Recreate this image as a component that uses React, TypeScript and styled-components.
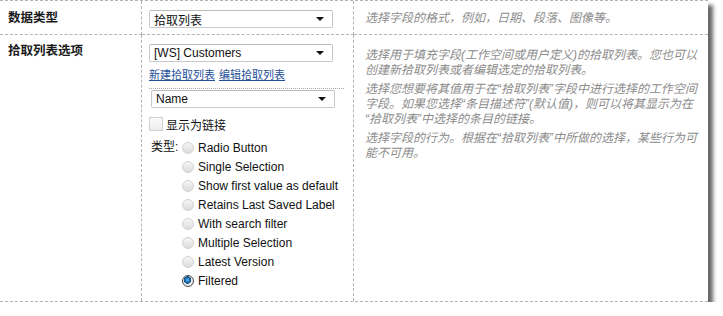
import React from "react";
import styled, { createGlobalStyle } from "styled-components";

const Global = createGlobalStyle`
  html, body { margin: 0; padding: 0; background: #fff; }
  body {
    font-family: "Liberation Sans", "Noto Sans CJK SC", Arial, sans-serif;
    font-size: 12px;
    color: #111;
  }
`;

const dash = "1px dashed #b4b4b4";

const Panel = styled.div`
  width: 708px;
  display: grid;
  grid-template-columns: 142px 212px 354px;
  border-top: ${dash};
  border-bottom: ${dash};
  box-shadow: 5px 5px 4px rgba(0, 0, 0, 0.6);
  background: #fff;
`;

const LabelCell = styled.div<{ $last?: boolean; $top: number }>`
  border-right: ${dash};
  border-bottom: ${(p) => (p.$last ? "none" : dash)};
  padding: ${(p) => p.$top}px 0 0 8px;
  font-weight: bold;
  font-size: 12.5px;
  line-height: 15px;
  color: #1a1a1a;
`;

const FieldCell = styled.div<{ $last?: boolean }>`
  border-right: ${dash};
  border-bottom: ${(p) => (p.$last ? "none" : dash)};
  padding: 9px 9px ${(p) => (p.$last ? 11 : 0)}px 7px;
  min-height: 24px;
`;

const HelpCell = styled.div<{ $last?: boolean; $top: number }>`
  border-bottom: ${(p) => (p.$last ? "none" : dash)};
  padding: ${(p) => p.$top}px 10px 0 11px;
  color: #8c8c8c;
  font-style: italic;
  font-size: 12px;
  line-height: 15px;
`;

const HelpPara = styled.p`
  margin: 0 0 4px 0;
`;

const Select = styled.div<{ $indent?: number }>`
  box-sizing: border-box;
  width: 184px;
  height: 18px;
  margin-left: ${(p) => p.$indent ?? 0}px;
  border: 1px solid #c9c9c9;
  border-top-color: #bdbdbd;
  border-radius: 2px;
  background: #fff;
  display: flex;
  align-items: center;
  justify-content: space-between;
  padding: 0 8px 0 4px;
  font-size: 12px;
  color: #111;
`;

const Arrow = styled.span`
  width: 0;
  height: 0;
  border-left: 4px solid transparent;
  border-right: 4px solid transparent;
  border-top: 4px solid #111;
`;

const Links = styled.div`
  width: 195px;
  margin-top: 6px;
  padding-bottom: 6px;
  height: 14px;
  line-height: 14px;
  border-bottom: 1px dotted #a8a8a8;
  display: flex;
  gap: 4px;
`;

const Link = styled.a`
  color: #25509a;
  text-decoration: underline;
  font-size: 11px;
  cursor: pointer;
`;

const NameWrap = styled.div`
  margin-top: 1px;
`;

const CheckRow = styled.label`
  display: flex;
  align-items: center;
  height: 16px;
  margin-top: 8px;
  gap: 3px;
  font-size: 12px;
`;

const CheckBox = styled.span`
  box-sizing: border-box;
  width: 14px;
  height: 14px;
  border: 1px solid #d0d0d0;
  background: linear-gradient(#fafafa, #ededed);
`;

const TypeBlock = styled.div`
  display: flex;
  margin-top: 6px;
`;

const TypeLabel = styled.div`
  width: 31px;
  padding-left: 2px;
  height: 19px;
  line-height: 19px;
  font-size: 12px;
`;

const RadioList = styled.div`
  display: flex;
  flex-direction: column;
`;

const RadioRow = styled.label`
  display: flex;
  align-items: center;
  height: 19px;
  gap: 4px;
  font-size: 12px;
  color: #111;
  white-space: nowrap;
`;

const RadioDot = styled.span<{ $checked?: boolean }>`
  box-sizing: border-box;
  width: 12px;
  height: 12px;
  border-radius: 50%;
  flex: none;
  border: 1px solid ${(p) => (p.$checked ? "#4a4a4a" : "#d2d2d2")};
  background: ${(p) =>
    p.$checked
      ? "radial-gradient(circle at 45% 40%, #7cc3f0 0, #1b74b8 2px, #0b4f8a 3.5px, #e8e8e8 4px)"
      : "linear-gradient(#f6f6f6, #dcdcdc)"};
`;

const types = [
  "Radio Button",
  "Single Selection",
  "Show first value as default",
  "Retains Last Saved Label",
  "With search filter",
  "Multiple Selection",
  "Latest Version",
  "Filtered",
];

export default function App() {
  return (
    <>
      <Global />
      <Panel>
        <LabelCell $top={10}>数据类型</LabelCell>
        <FieldCell>
          <Select>
            <span>拾取列表</span>
            <Arrow />
          </Select>
        </FieldCell>
        <HelpCell $top={10}>
          <HelpPara>选择字段的格式，例如，日期、段落、图像等。</HelpPara>
        </HelpCell>

        <LabelCell $last $top={9}>拾取列表选项</LabelCell>
        <FieldCell $last>
          <Select>
            <span>[WS] Customers</span>
            <Arrow />
          </Select>
          <Links>
            <Link>新建拾取列表</Link>
            <Link>编辑拾取列表</Link>
          </Links>
          <NameWrap>
            <Select $indent={2}>
              <span>Name</span>
              <Arrow />
            </Select>
          </NameWrap>
          <CheckRow>
            <CheckBox />
            <span>显示为链接</span>
          </CheckRow>
          <TypeBlock>
            <TypeLabel>类型:</TypeLabel>
            <RadioList>
              {types.map((t) => (
                <RadioRow key={t}>
                  <RadioDot $checked={t === "Filtered"} />
                  <span>{t}</span>
                </RadioRow>
              ))}
            </RadioList>
          </TypeBlock>
        </FieldCell>
        <HelpCell $last $top={13}>
          <HelpPara>
            选择用于填充字段(工作空间或用户定义)的拾取列表。您也可以
            <br />
            创建新拾取列表或者编辑选定的拾取列表。
          </HelpPara>
          <HelpPara>
            选择您想要将其值用于在“拾取列表”字段中进行选择的工作空间
            <br />
            字段。如果您选择“条目描述符”(默认值)，则可以将其显示为在
            <br />
            “拾取列表”中选择的条目的链接。
          </HelpPara>
          <HelpPara>
            选择字段的行为。根据在“拾取列表”中所做的选择，某些行为可
            <br />
            能不可用。
          </HelpPara>
        </HelpCell>
      </Panel>
    </>
  );
}
